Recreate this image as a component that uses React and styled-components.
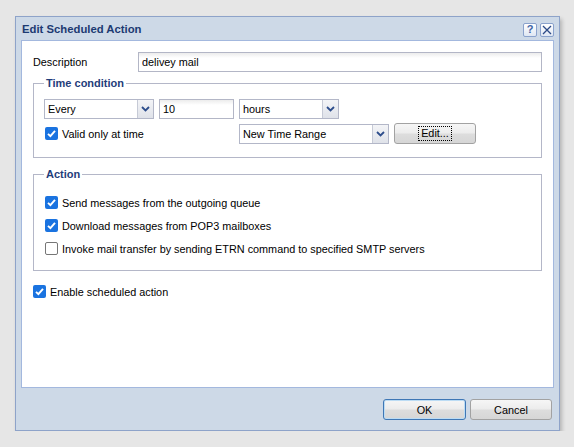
import React from 'react';
import styled, { createGlobalStyle, css } from 'styled-components';

const Global = createGlobalStyle`
  html, body { margin: 0; padding: 0; background: #e6e6e6; }
  body {
    font-family: "Liberation Sans", Arial, sans-serif;
    font-size: 10.85px;
    color: #000;
  }
  * { box-sizing: border-box; }
`;

const Page = styled.div`
  padding: 16px 0 0 15px;
`;

const Dialog = styled.div`
  width: 545px;
  height: 415px;
  border: 1px solid #8ea3c9;
  background: #cdd9e7;
  display: flex;
  flex-direction: column;
  box-shadow: 2px 3px 4px rgba(0, 0, 0, 0.22);
`;

const TitleBar = styled.div`
  height: 23px;
  display: flex;
  align-items: center;
  padding: 0 5px 0 6px;
`;

const Title = styled.div`
  flex: 1;
  font-weight: bold;
  font-size: 11.3px;
  color: #1c3a72;
`;

const TitleButtons = styled.div`
  display: flex;
  gap: 3px;
  margin-top: 2px;
`;

const TitleButton = styled.div`
  width: 14px;
  height: 14px;
  border: 1px solid #8aa2cc;
  border-radius: 2px;
  background: linear-gradient(#ffffff, #dfe7f3);
  display: flex;
  align-items: center;
  justify-content: center;
  color: #3d64a6;
  font-weight: bold;
  font-size: 11px;
  line-height: 1;
`;

const Panel = styled.div`
  height: 348px;
  margin: 0 5px;
  border: 1px solid #a3b8de;
  background: #fff;
  padding: 11px;
  display: flex;
  flex-direction: column;
`;

const FieldRow = styled.div`
  display: grid;
  grid-template-columns: 105px 1fr;
  align-items: center;
  height: 20px;
`;

const TextInput = styled.div`
  height: ${(p) => p.$h || 20}px;
  width: ${(p) => (p.$w ? `${p.$w}px` : 'auto')};
  border: 1px solid #b3b6c6;
  padding: 0 3px;
  display: flex;
  align-items: center;
  background: linear-gradient(#ececec, #ffffff 5px);
`;

const Group = styled.fieldset`
  margin: ${(p) => p.$mt}px 0 0;
  border: 1px solid #b4b7c8;
  padding: ${(p) => p.$pt}px 10px ${(p) => p.$pb}px;
  min-width: 0;
`;

const Legend = styled.legend`
  font-weight: bold;
  color: #1f3d7a;
  padding: 0 2px;
  line-height: 14px;
  font-size: 11px;
`;

const Row = styled.div`
  display: flex;
  align-items: center;
  gap: 5px;
  height: ${(p) => p.$h}px;
  margin-top: ${(p) => p.$mt || 0}px;
`;

const SelectBox = styled.div`
  width: ${(p) => p.$w}px;
  height: 20px;
  border: 1px solid #b3b7c8;
  display: flex;
  background: #fff;
`;

const SelectText = styled.div`
  flex: 1;
  padding-left: 3px;
  display: flex;
  align-items: center;
`;

const SelectArrow = styled.div`
  width: 16px;
  border-left: 1px solid #c6cad6;
  background: linear-gradient(#f3f4f7, #dfe2e9);
  display: flex;
  align-items: center;
  justify-content: center;
`;

const Button = styled.div`
  width: ${(p) => p.$w}px;
  height: 21px;
  border: 1px solid ${(p) => (p.$default ? '#3f77b5' : '#a2a2a2')};
  border-radius: 3px;
  background: linear-gradient(#f6f6f6 0%, #ececec 48%, #dddddd 52%, #d6d6d6 100%);
  display: flex;
  align-items: center;
  justify-content: center;
  ${(p) =>
    p.$default &&
    css`
      box-shadow: inset 0 0 0 1px #bcdcf4;
    `}
`;

const FocusText = styled.span`
  outline: 1px dotted #000;
  padding: 0 2px;
  line-height: 13px;
`;

const CheckRow = styled.label`
  display: flex;
  align-items: center;
  gap: 4px;
  height: ${(p) => p.$h || 23}px;
  margin-left: ${(p) => (p.$ml === undefined ? 1 : p.$ml)}px;
  width: ${(p) => (p.$w ? `${p.$w}px` : 'auto')};
  margin-top: ${(p) => p.$mt || 0}px;
`;

const Box = styled.span`
  width: 13px;
  height: 13px;
  border-radius: 2px;
  flex: none;
  display: flex;
  align-items: center;
  justify-content: center;
  ${(p) =>
    p.$checked
      ? css`
          background: #1a73e0;
        `
      : css`
          border: 1px solid #767676;
          background: #fff;
        `}
`;

const Footer = styled.div`
  flex: 1;
  display: flex;
  justify-content: flex-end;
  align-items: flex-start;
  gap: 4px;
  padding: 11px 7px 0 0;
`;

const Chevron = () => (
  <svg width="9" height="6" viewBox="0 0 9 6">
    <path d="M1 1 L4.5 4.5 L8 1" fill="none" stroke="#2d4d8c" strokeWidth="1.8" />
  </svg>
);

const Check = ({ checked, children, ...rest }) => (
  <CheckRow {...rest}>
    <Box $checked={checked}>
      {checked && (
        <svg width="11" height="11" viewBox="0 0 11 11">
          <path d="M2 5.8 L4.4 8.2 L9 2.8" fill="none" stroke="#fff" strokeWidth="1.9" />
        </svg>
      )}
    </Box>
    <span>{children}</span>
  </CheckRow>
);

const Select = ({ w, children }) => (
  <SelectBox $w={w}>
    <SelectText>{children}</SelectText>
    <SelectArrow>
      <Chevron />
    </SelectArrow>
  </SelectBox>
);

export default function App() {
  return (
    <Page>
      <Global />
      <Dialog>
        <TitleBar>
          <Title>Edit Scheduled Action</Title>
          <TitleButtons>
            <TitleButton>?</TitleButton>
            <TitleButton>
              <svg width="10" height="10" viewBox="0 0 10 10">
                <path d="M1 1 L9 9 M9 1 L1 9" stroke="#2c4a86" strokeWidth="1.3" />
              </svg>
            </TitleButton>
          </TitleButtons>
        </TitleBar>
        <Panel>
          <FieldRow>
            <span>Description</span>
            <TextInput>delivey mail</TextInput>
          </FieldRow>
          <Group $mt={4} $pt={9} $pb={13}>
            <Legend>Time condition</Legend>
            <Row $h={20}>
              <Select w={110}>Every</Select>
              <TextInput $w={75}>10</TextInput>
              <Select w={100}>hours</Select>
            </Row>
            <Row $h={21} $mt={4}>
              <Check checked $w={189} $h={21}>
                Valid only at time
              </Check>
              <Select w={150}>New Time Range</Select>
              <Button $w={82}>
                <FocusText>Edit...</FocusText>
              </Button>
            </Row>
          </Group>
          <Group $mt={9} $pt={10} $pb={10}>
            <Legend>Action</Legend>
            <Check checked>Send messages from the outgoing queue</Check>
            <Check checked>Download messages from POP3 mailboxes</Check>
            <Check>Invoke mail transfer by sending ETRN command to specified SMTP servers</Check>
          </Group>
          <Check checked $mt={9} $ml={0}>
            Enable scheduled action
          </Check>
        </Panel>
        <Footer>
          <Button $w={83} $default>
            OK
          </Button>
          <Button $w={82}>Cancel</Button>
        </Footer>
      </Dialog>
    </Page>
  );
}
